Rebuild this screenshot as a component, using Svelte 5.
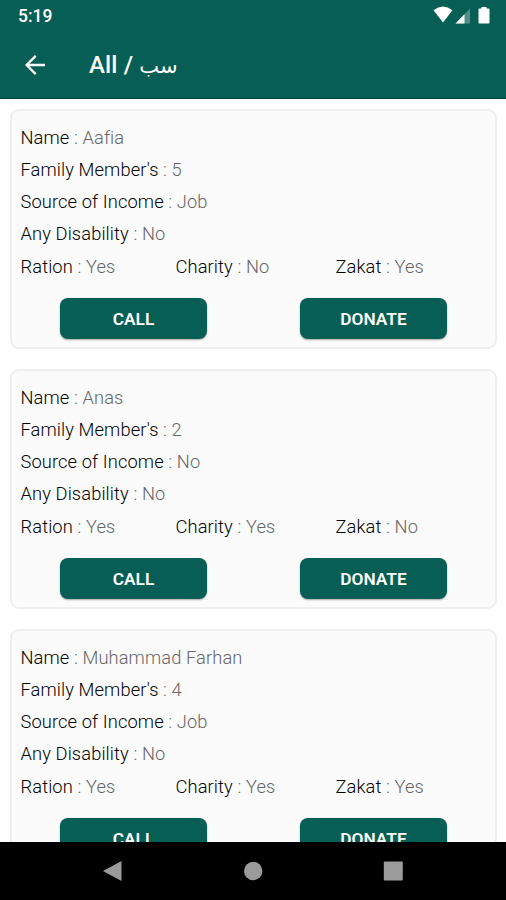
<script lang="ts">
  type Person = {
    name: string;
    family: number;
    income: string;
    disability: string;
    ration: string;
    charity: string;
    zakat: string;
  };

  const people: Person[] = [
    { name: 'Aafia', family: 5, income: 'Job', disability: 'No', ration: 'Yes', charity: 'No', zakat: 'Yes' },
    { name: 'Anas', family: 2, income: 'No', disability: 'No', ration: 'Yes', charity: 'Yes', zakat: 'No' },
    { name: 'Muhammad Farhan', family: 4, income: 'Job', disability: 'No', ration: 'Yes', charity: 'Yes', zakat: 'Yes' },
  ];
</script>

{#snippet field(label: string, value: string | number)}
  <span>{label} <span class="value">: {value}</span></span>
{/snippet}

<div class="screen">
  <header>
    <div class="status">
      <span class="time">5:19</span>
      <svg width="60" height="20" viewBox="0 0 60 20" fill="#fff">
        <path d="M0.5 5.2Q10 -2.2 19.5 5.2L10 17.5Z" />
        <path d="M22.5 18.5L37 3.5V18.5Z" fill-opacity="0.3" />
        <path d="M22.5 18.5L31.5 9.2V18.5Z" />
        <path d="M48.5 2H53.5V3.5H55.5Q56.5 3.5 56.5 4.5V17.5Q56.5 18.5 55.5 18.5H46.5Q45.5 18.5 45.5 17.5V4.5Q45.5 3.5 46.5 3.5H48.5Z" />
      </svg>
    </div>
    <div class="toolbar">
      <svg width="20" height="20" viewBox="0 0 20 20" fill="none" stroke="#fff" stroke-width="2.3">
        <path d="M20 10H2M10.7 0.9L1.6 10L10.7 19.1" />
      </svg>
      <h1>All / <span class="urdu" lang="ur">سب</span></h1>
    </div>
  </header>

  <main>
    {#each people as person (person.name)}
      <article>
        <div class="row">{@render field('Name', person.name)}</div>
        <div class="row">{@render field("Family Member's", person.family)}</div>
        <div class="row">{@render field('Source of Income', person.income)}</div>
        <div class="row">{@render field('Any Disability', person.disability)}</div>
        <div class="row triple">
          {@render field('Ration', person.ration)}
          {@render field('Charity', person.charity)}
          {@render field('Zakat', person.zakat)}
        </div>
        <div class="actions">
          <button>CALL</button>
          <button>DONATE</button>
        </div>
      </article>
    {/each}
  </main>

  <nav>
    <svg width="20" height="22" viewBox="0 0 20 22"><path d="M0 11L18.5 1V21Z" /></svg>
    <svg width="20" height="22" viewBox="0 0 20 22"><circle cx="10.2" cy="11" r="9.2" /></svg>
    <svg width="20" height="22" viewBox="0 0 20 22"><rect x="0.8" y="1.5" width="19" height="19" rx="1" /></svg>
  </nav>
</div>

<style>
  :global(body) {
    margin: 0;
    overflow: hidden;
  }

  .screen {
    display: flex;
    flex-direction: column;
    height: 900px;
    width: 506px;
    overflow: hidden;
    background: #fff;
    font-family: Roboto, sans-serif;
  }

  header {
    flex: none;
    box-sizing: border-box;
    height: 99px;
    background: #075e54;
    border-bottom: 1px solid #034238;
    color: #fff;
  }

  .status {
    display: flex;
    justify-content: space-between;
    align-items: center;
    height: 32px;
    padding: 0 13px 0 18px;
  }

  .status svg {
    margin-top: -3px;
  }

  .time {
    font-size: 17.5px;
    font-weight: 500;
  }

  .toolbar {
    display: flex;
    align-items: center;
    height: 66px;
    padding-left: 25px;
  }

  h1 {
    margin: 1px 0 0 44px;
    font-size: 24px;
    font-weight: 500;
    line-height: 32px;
    letter-spacing: 0.15px;
    white-space: nowrap;
  }

  .urdu {
    font-family: "DejaVu Sans", sans-serif;
    font-size: 21px;
    font-weight: 400;
    letter-spacing: 0;
  }

  main {
    flex: 1;
    min-height: 0;
    overflow: hidden;
    padding: 10px 9px 0 10px;
  }

  article {
    box-sizing: border-box;
    height: 240px;
    margin-bottom: 20px;
    padding: 10.5px 0 0 8.5px;
    border: 2px solid #eee;
    border-radius: 9px;
    background: #fbfbfb;
  }

  .row {
    height: 32.3px;
    line-height: 32.3px;
    font-size: 18.3px;
    font-weight: 300;
    letter-spacing: 0.11px;
    color: #000;
    white-space: nowrap;
  }

  .value {
    color: #666;
  }

  .triple {
    display: grid;
    grid-template-columns: 155px 160px 1fr;
  }

  .actions {
    display: flex;
    gap: 93px;
    padding: 15px 0 0 39.5px;
  }

  button {
    width: 147px;
    height: 41px;
    padding: 0;
    border: 0;
    border-radius: 8px;
    background: #075e54;
    box-shadow: 0 1px 2px rgba(0, 0, 0, 0.35);
    color: #fff;
    font: 600 17.3px/43px Roboto, sans-serif;
  }

  nav {
    flex: none;
    display: flex;
    align-items: center;
    justify-content: center;
    gap: 120px;
    height: 58px;
    background: #000;
  }

  nav svg {
    fill: #9b9b9b;
  }
</style>
